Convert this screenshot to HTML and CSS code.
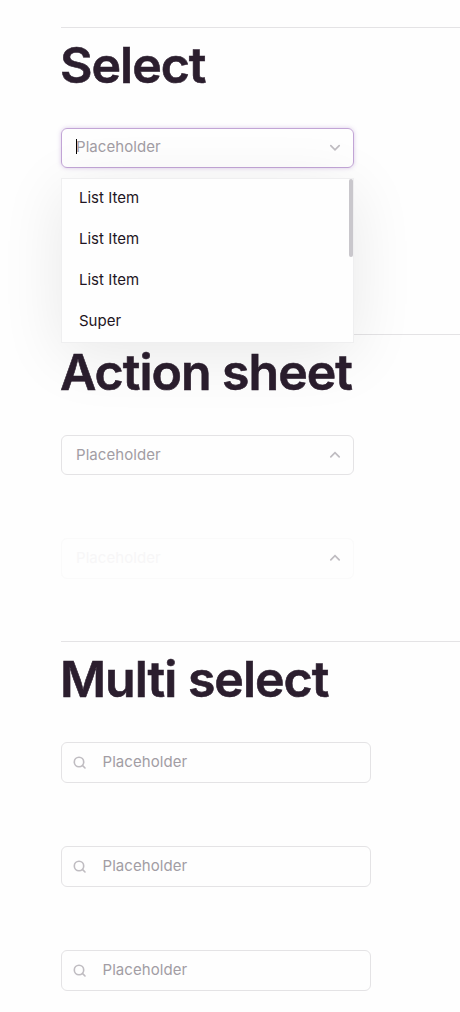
FILE: index.html
```html
<!DOCTYPE html>
<html lang="en">
<head>
<meta charset="utf-8">
<title>Select</title>
<link rel="stylesheet" href="styles.css">
</head>
<body>
<svg class="defs" width="0" height="0">
  <symbol id="chevron-down" viewBox="0 0 12 8"><path d="M1.800 1.600 6 5.800l4.200-4.200"/></symbol>
  <symbol id="chevron-up" viewBox="0 0 12 8"><path d="M1.800 5.800 6 1.600l4.200 4.200"/></symbol>
  <symbol id="search" viewBox="0 0 14 14"><circle cx="6" cy="6" r="4.700"/><path d="M9.400 9.400 12 12"/></symbol>
</svg>
<main class="page">
  <section class="section">
    <h1 class="title">Select</h1>
    <div class="stack">
      <div class="field focused">
        <span class="label">Placeholder<i class="caret"></i></span>
        <svg class="chevron"><use href="#chevron-down"/></svg>
        <div class="menu">
          <div class="item">List Item</div>
          <div class="item">List Item</div>
          <div class="item">List Item</div>
          <div class="item">Super</div>
          <div class="thumb"></div>
        </div>
      </div>
    </div>
  </section>
  <section class="section">
    <h1 class="title">Action sheet</h1>
    <div class="stack sheets">
      <div class="field sheet">
        <span class="label">Placeholder</span>
        <svg class="chevron"><use href="#chevron-up"/></svg>
      </div>
      <div class="field disabled">
        <span class="label">Placeholder</span>
        <svg class="chevron"><use href="#chevron-up"/></svg>
      </div>
    </div>
  </section>
  <section class="section">
    <h1 class="title">Multi select</h1>
    <div class="stack">
      <div class="field multi"><svg class="search"><use href="#search"/></svg><span class="label">Placeholder</span></div>
      <div class="field multi"><svg class="search"><use href="#search"/></svg><span class="label">Placeholder</span></div>
      <div class="field multi"><svg class="search"><use href="#search"/></svg><span class="label">Placeholder</span></div>
    </div>
  </section>
</main>
</body>
</html>
```
FILE: styles.css
```css
* { box-sizing: border-box; }
html, body { height: 100%; }
body {
  margin: 0;
  overflow: hidden;
  background: #fefefe;
  font-family: Inter, "Liberation Sans", sans-serif;
  color: #2b1e2e;
}
.defs { display: block; }
.page { padding: 27px 0 0 61px; }
.section {
  height: 307px;
  border-top: 1px solid #e4e3e5;
}
.title {
  margin: 0 0 0 -1px;
  padding-top: 7px;
  height: 100px;
  font-size: 50px;
  line-height: 60px;
  font-weight: 600;
  letter-spacing: -1px;
  -webkit-text-stroke: .6px #2b1e2e;
  white-space: nowrap;
}
.stack {
  display: flex;
  flex-direction: column;
  gap: 64px;
}
.sheets { gap: 63px; }
.field {
  position: relative;
  display: flex;
  align-items: center;
  justify-content: space-between;
  width: 293px;
  height: 40px;
  padding: 0 12px 0 14px;
  border: 1px solid #e4e3e5;
  border-radius: 6px;
  font-size: 15px;
  line-height: 20px;
}
.label { position: relative; top: -1px; color: #a29da4; letter-spacing: .06px; }
.sheet .label { top: 0; }
.caret {
  position: absolute;
  left: 0;
  top: 2px;
  width: 1px;
  height: 15px;
  background: #000;
}
.chevron {
  width: 12px;
  height: 8px;
  fill: none;
  stroke: #bfbcc1;
  stroke-width: 1.7;
  stroke-linecap: round;
}
.focused {
  border-color: #c2a5d6;
  box-shadow: 0 0 4px rgba(150, 100, 190, .35);
}
.disabled { height: 41px; border-color: #fafafa; }
.disabled .label { color: #f7f6f7; }
.disabled .chevron { margin-bottom: 2px; }
.menu {
  position: absolute;
  z-index: 1;
  left: -1px;
  top: 49px;
  width: 293px;
  height: 165px;
  border: 1px solid #efeff0;
  background: #fefefe;
  box-shadow: 0 12px 64px rgba(0, 0, 0, .09);
}
.item {
  height: 41px;
  padding-left: 17px;
  line-height: 38px;
  color: #1e1523;
}
.thumb {
  position: absolute;
  top: 0;
  right: 0;
  width: 4px;
  height: 78px;
  border-radius: 2px;
  background: #c9c7cc;
}
.multi {
  justify-content: flex-start;
  gap: 15.5px;
  width: 310px;
  height: 41px;
  padding-left: 11px;
  margin-bottom: -1px;
}
.search {
  width: 14px;
  height: 14px;
  fill: none;
  stroke: #bfbcc1;
  stroke-width: 1.6;
  stroke-linecap: round;
}
```
